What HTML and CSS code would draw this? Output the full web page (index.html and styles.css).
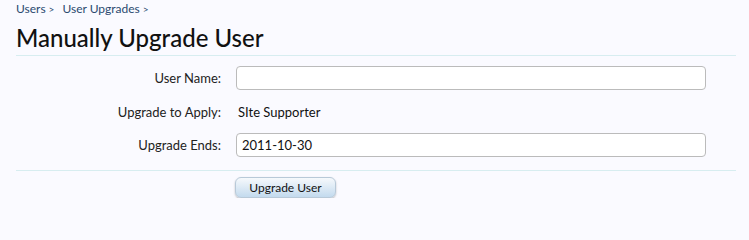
FILE: index.html
```html
<!DOCTYPE html>
<html>
<head>
<meta charset="utf-8">
<link rel="stylesheet" href="styles.css">
</head>
<body>
<div class="page">
  <nav class="breadcrumb">
    <a href="#">Users</a><span class="sep">&gt;</span>
    <a href="#">User Upgrades</a><span class="sep">&gt;</span>
  </nav>
  <h1 class="title">Manually Upgrade User</h1>
  <form class="form">
    <div class="rows">
      <div class="row">
        <label class="label">User Name:</label>
        <input class="field" type="text" value="">
      </div>
      <div class="row row-static">
        <label class="label">Upgrade to Apply:</label>
        <div class="value">SIte Supporter</div>
      </div>
      <div class="row">
        <label class="label">Upgrade Ends:</label>
        <input class="field" type="text" value="2011-10-30">
      </div>
    </div>
    <div class="submit">
      <button class="button" type="button">Upgrade User</button>
    </div>
  </form>
</div>
</body>
</html>
```
FILE: styles.css
```css
html, body {
  margin: 0;
  padding: 0;
  background: #fafaff;
}
body {
  font-family: Lato, "DejaVu Sans", sans-serif;
  color: #000;
}
.page {
  padding: 2px 13px 0 16px;
}
.breadcrumb {
  font-size: 12px;
  line-height: 14px;
  display: flex;
  align-items: center;
}
.breadcrumb a {
  color: #2b4a6f;
  text-decoration: none;
}
.breadcrumb .sep {
  color: #2b4a6f;
  font-size: 10px;
  margin: 0 8px 0 3px;
}
.title {
  margin: 7px 0 0 0;
  font-size: 24px;
  line-height: 30px;
  font-weight: 500;
  color: #111;
  padding-bottom: 2px;
  border-bottom: 1px solid #d7edf0;
}
.form {
  display: flex;
  flex-direction: column;
}
.rows {
  display: flex;
  flex-direction: column;
  gap: 10px;
  padding: 10px 0 13px;
  border-bottom: 1px solid #d7edf0;
}
.row {
  display: grid;
  grid-template-columns: 205px 470px;
  column-gap: 15px;
  align-items: center;
  min-height: 24px;
}
.row-static {
  min-height: 23px;
}
.label {
  text-align: right;
  font-size: 13px;
  color: #222;
}
.value {
  font-size: 13px;
  color: #111;
  padding-left: 2px;
}
.field {
  box-sizing: border-box;
  width: 470px;
  height: 24px;
  border: 1px solid #bbb;
  border-radius: 4px;
  background: #fff;
  font-family: inherit;
  font-size: 13px;
  padding: 0 5px;
  color: #111;
  margin: 0;
}
.submit {
  padding: 5px 0 0 219px;
}
.button {
  width: 101px;
  height: 21px;
  border: 1px solid #b8c9d8;
  border-radius: 6px;
  background: linear-gradient(#f6f9fc, #c3daee);
  box-shadow: 0 1px 2px rgba(0,0,0,0.25);
  font-family: inherit;
  font-size: 12px;
  color: #111;
  padding: 0;
}
```
